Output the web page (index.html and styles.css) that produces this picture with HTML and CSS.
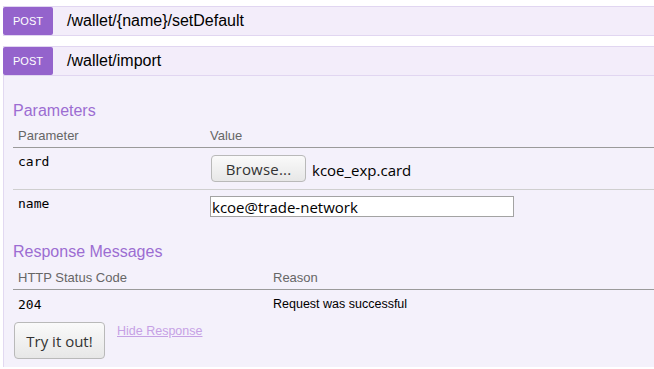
FILE: index.html
```html
<!DOCTYPE html>
<html lang="en">
<head>
  <meta charset="UTF-8">
  <title>Wallet API</title>
  <link rel="stylesheet" href="styles.css">
</head>
<body>

  <!-- Collapsed endpoint -->
  <div class="endpoint">
    <div class="heading">
      <span class="verb">POST</span>
      <span class="path">/wallet/{name}/setDefault</span>
    </div>
  </div>

  <!-- Expanded endpoint -->
  <div class="endpoint">
    <div class="heading">
      <span class="verb">POST</span>
      <span class="path">/wallet/import</span>
    </div>

    <div class="content">
      <h4 class="section-title">Parameters</h4>
      <table class="grid params">
        <thead>
          <tr><th class="first-col">Parameter</th><th>Value</th></tr>
        </thead>
        <tbody>
          <tr>
            <td class="code">card</td>
            <td>
              <div class="file-field">
                <button type="button" class="btn browse">Browse...</button>
                <span class="file-name">kcoe_exp.card</span>
              </div>
            </td>
          </tr>
          <tr class="last">
            <td class="code">name</td>
            <td><input class="text-input" type="text" value="kcoe@trade-network"></td>
          </tr>
        </tbody>
      </table>

      <h4 class="section-title responses-title">Response Messages</h4>
      <table class="grid responses">
        <thead>
          <tr><th class="first-col">HTTP Status Code</th><th>Reason</th></tr>
        </thead>
        <tbody>
          <tr class="last">
            <td class="code">204</td>
            <td class="reason">Request was successful</td>
          </tr>
        </tbody>
      </table>

      <div class="actions">
        <button type="button" class="btn try">Try it out!</button>
        <a href="#" class="hide-link">Hide Response</a>
      </div>
    </div>
  </div>

</body>
</html>
```

FILE: styles.css
```css
html, body {
  overflow: hidden;
}

body {
  margin: 0;
  padding: 6px 0 0 3px;
  font-family: 'Liberation Sans', Arial, sans-serif;
  background-color: #fff;
  color: #000;
}

.endpoint {
  margin-right: -6px;
}

.endpoint + .endpoint {
  margin-top: 10px;
}

/* Purple heading bar */
.heading {
  display: flex;
  align-items: center;
  height: 28px;
  background-color: #f3edfa;
  border-top: 1px solid #e1d6f1;
  border-bottom: 1px solid #e1d6f1;
}

.verb {
  width: 50px;
  height: 28px;
  line-height: 28px;
  text-align: center;
  background-color: #9463cc;
  color: #fff;
  font-size: 11px;
  border-radius: 2px;
}

.path {
  margin-left: 14px;
  font-size: 16px;
  line-height: 20px;
  color: #000;
}

/* Expanded body */
.content {
  background-color: #f4f1fb;
  border-left: 1px solid #e2d9f1;
  padding: 25px 0 8px 9px;
}

.section-title {
  margin: 0 0 4px;
  font-size: 16px;
  line-height: 20px;
  font-weight: normal;
  color: #9c6dd2;
}

.responses-title {
  margin: 18px 0 5px;
}

.grid {
  width: 100%;
  border-collapse: collapse;
}

.grid th {
  text-align: left;
  font-weight: normal;
  font-size: 13px;
  line-height: 16px;
  color: #666;
  padding: 3px 5px;
  border-bottom: 1px solid #9a9a9a;
}

.params .first-col {
  width: 182px;
}

.responses .first-col {
  width: 245px;
}

.grid td {
  vertical-align: top;
  padding: 7px 5px;
  border-bottom: 1px solid #cfcfcf;
}

.grid tr.last td {
  border-bottom: none;
}

.grid td.code {
  font-family: 'DejaVu Sans Mono', monospace;
  font-size: 13px;
  line-height: 15px;
  padding-top: 6px;
}

.responses td.code {
  padding-top: 7px;
}

.params tr.last td {
  padding-top: 6px;
}

.file-field {
  display: flex;
  align-items: center;
  gap: 6px;
  margin-left: 1px;
}

.file-name {
  font-family: 'Open Sans', sans-serif;
  font-size: 15px;
  color: #000;
  padding-top: 2px;
}

.text-input {
  display: block;
  box-sizing: border-box;
  width: 304px;
  height: 21px;
  margin: 0;
  padding: 0 1px;
  border: 1px solid #a3a3a3;
  background-color: #fff;
  font-family: 'Open Sans', sans-serif;
  font-size: 15px;
  line-height: 19px;
  color: #000;
}

.reason {
  font-size: 12.5px;
  line-height: 15px;
  color: #000;
}

/* Buttons */
.btn {
  box-sizing: border-box;
  margin: 0;
  padding: 0;
  font-family: 'Open Sans', sans-serif;
  font-size: 15px;
  color: #333;
  background: linear-gradient(#fafafa, #e7e7e7);
  border: 1px solid #b9b9b9;
  border-radius: 4px;
}

.browse {
  width: 95px;
  height: 27px;
  letter-spacing: 0.2px;
}

.actions {
  display: flex;
  align-items: flex-start;
  margin-top: 3px;
  padding-left: 1px;
}

.try {
  width: 91px;
  height: 37px;
  margin-right: 12px;
}

.hide-link {
  margin-top: 2px;
  font-size: 12.5px;
  line-height: 15px;
  color: #c6a1e5;
}
```
